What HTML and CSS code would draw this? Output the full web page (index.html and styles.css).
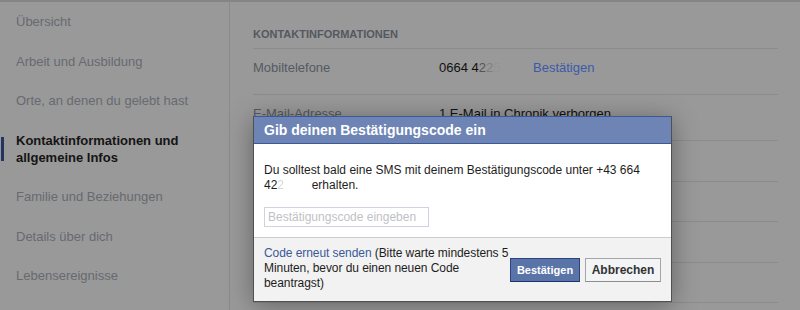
FILE: index.html
```html
<!DOCTYPE html>
<html lang="de">
<head>
    <meta charset="UTF-8">
    <title>Kontaktinformationen</title>
    <link rel="stylesheet" href="styles.css">
</head>
<body>
    <div class="page">
        <ul class="side-nav">
            <li class="nav-item">Übersicht</li>
            <li class="nav-item">Arbeit und Ausbildung</li>
            <li class="nav-item">Orte, an denen du gelebt hast</li>
            <li class="nav-item active"><span>Kontaktinformationen und allgemeine Infos</span></li>
            <li class="nav-item">Familie und Beziehungen</li>
            <li class="nav-item">Details über dich</li>
            <li class="nav-item">Lebensereignisse</li>
        </ul>

        <div class="content">
            <h2 class="section-title">KONTAKTINFORMATIONEN</h2>
            <div class="info-row tall">
                <span class="info-label">Mobiltelefone</span>
                <span class="info-value">0664 4<span class="fade-1">2</span><span class="fade-2">2</span><span class="fade-3">5</span></span>
                <a class="info-link" href="#">Bestätigen</a>
            </div>
            <div class="info-row tall">
                <span class="info-label">E-Mail-Adresse</span>
                <span class="info-value wide">1 E-Mail in Chronik verborgen</span>
            </div>
            <div class="info-row"></div>
            <div class="info-row"></div>
            <div class="info-row"></div>
            <div class="info-row"></div>
        </div>
    </div>

    <!-- confirmation dialog over the page -->
    <div class="dialog">
        <div class="dialog-header">Gib deinen Bestätigungscode ein</div>
        <div class="dialog-body">
            <p>Du solltest bald eine SMS mit deinem Bestätigungscode unter +43 664<br>42<span class="redacted">2</span> erhalten.</p>
            <input class="code-input" type="text" placeholder="Bestätigungscode eingeben">
        </div>
        <div class="dialog-footer">
            <p class="resend"><a href="#">Code erneut senden</a> (Bitte warte mindestens 5 Minuten, bevor du einen neuen Code beantragst)</p>
            <div class="buttons">
                <button class="btn btn-primary">Bestätigen</button>
                <button class="btn btn-cancel">Abbrechen</button>
            </div>
        </div>
    </div>
</body>
</html>
```

FILE: styles.css
```css
body {
    margin: 0;
    padding: 0;
    background-color: #999999; /* page dimmed by the dialog overlay */
    border-top: 2px solid #858585;
    font-family: "Liberation Sans", Arial, sans-serif;
    color: #333;
    height: 308px;
    overflow: hidden;
}

.page {
    display: flex;
}

/* left navigation */
.side-nav {
    list-style: none;
    margin: 0;
    padding: 0;
    width: 229px;
    border-right: 1px solid #8b8b8b;
    height: 308px;
}

.nav-item {
    padding: 11px 16px 11.5px;
    font-size: 13px;
    line-height: 17px;
    color: #676a70;
}

.nav-item.active {
    display: flex;
    align-items: center;
    color: #141414;
    font-weight: bold;
}

.nav-item.active::before {
    content: "";
    flex: none;
    width: 3px;
    height: 24px;
    margin-left: -15px;
    margin-right: 12px;
    background-color: #23345e;
}

/* contact info column */
.content {
    flex: 1;
    padding: 0 22px 0 23px;
}

.section-title {
    margin: 0;
    padding: 25px 0 7px;
    font-size: 11px;
    line-height: 14px;
    color: #545860;
    border-bottom: 1px solid #8c8c8c;
}

.info-row {
    display: grid;
    grid-template-columns: 186px 94px auto;
    padding: 10px 0 12.5px;
    min-height: 17px;
    font-size: 13px;
    line-height: 17px;
    border-bottom: 1px solid #8c8c8c;
}

.info-row.tall {
    padding-bottom: 18px;
}

.info-label {
    color: #555a62;
}

.info-value {
    color: #111;
    white-space: nowrap;
}

.info-value.wide {
    grid-column: 2 / 4;
}

.fade-1 { color: #555; }
.fade-2 { color: #808080; }
.fade-3 { color: #959595; }

.info-link {
    color: #3d59a8;
    text-decoration: none;
}

/* dialog */
.dialog {
    position: absolute;
    left: 253px;
    top: 116px;
    width: 417px;
    border: 1px solid #505050;
    border-top-color: #3b5998;
    background-color: #fff;
    box-shadow: 0 3px 24px rgba(0, 0, 0, 0.35);
}

.dialog-header {
    padding: 5px 10px;
    background-color: #6d84b4;
    border-bottom: 1px solid #3b5998;
    color: #fff;
    font-size: 14px;
    font-weight: bold;
    line-height: 16px;
}

.dialog-body {
    padding: 19px 10px 10px;
}

.dialog-body p {
    margin: 0 0 14px;
    font-size: 12px;
    line-height: 15px;
    color: #1d1d1d;
}

.redacted {
    display: inline-block;
    width: 31px;
    color: #d8d8d8;
    filter: blur(0.6px);
}

.code-input {
    display: block;
    box-sizing: border-box;
    width: 165px;
    height: 20px;
    margin: 0;
    padding: 2px 3px;
    border: 1px solid #cdd3df;
    font-family: "Liberation Sans", Arial, sans-serif;
    font-size: 12px;
}

.code-input::placeholder {
    color: #bfc1c6;
}

.dialog-footer {
    display: flex;
    justify-content: space-between;
    align-items: center;
    padding: 8px 10px 10px;
    background-color: #f2f2f2;
    border-top: 1px solid #cccccc;
}

.resend {
    flex: none;
    margin: 0;
    width: 246px;
    font-size: 12px;
    line-height: 15px;
    letter-spacing: -0.07px;
    color: #1d1d1d;
}

.resend a {
    color: #3b5998;
    text-decoration: none;
}

.buttons {
    display: flex;
    gap: 5px;
    margin-top: 3px;
}

.btn {
    height: 24px;
    padding: 0;
    font-family: "Liberation Sans", Arial, sans-serif;
    font-weight: bold;
    cursor: pointer;
}

.btn-primary {
    width: 70px;
    background-color: #5b74a8;
    border: 1px solid #29447e;
    border-bottom-color: #1a356e;
    color: #fff;
    font-size: 11px;
}

.btn-cancel {
    width: 76px;
    background-color: #f3f4f6;
    border: 1px solid #a5a5a5;
    border-bottom-color: #8e8e8e;
    color: #333;
    font-size: 12px;
}
```
